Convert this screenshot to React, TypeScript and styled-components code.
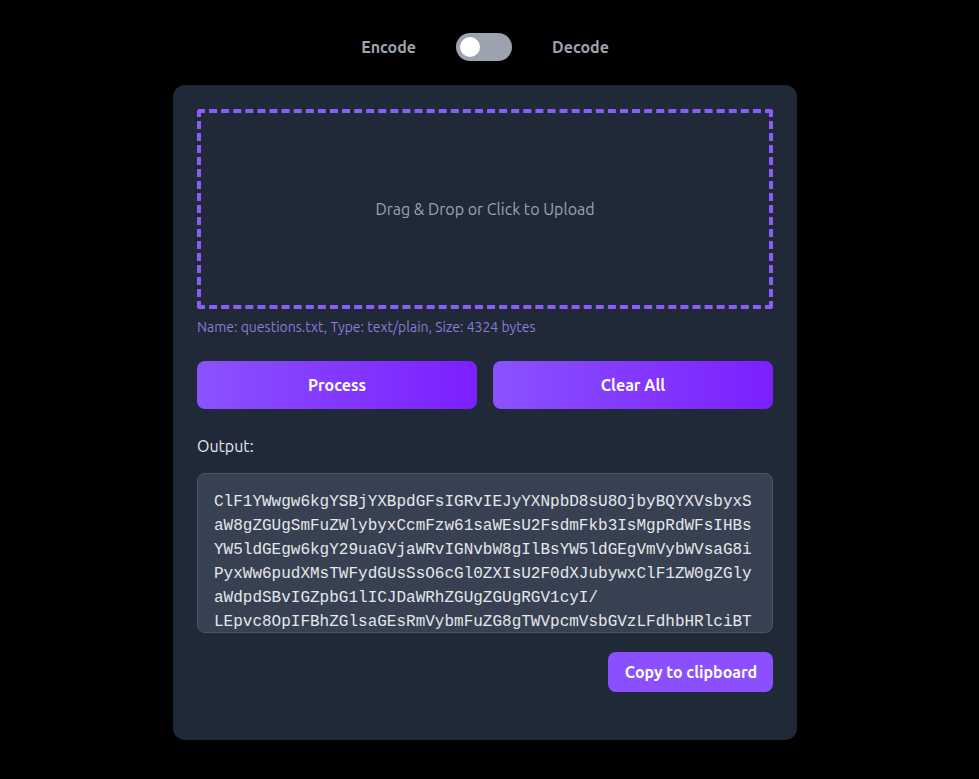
import React, { useState } from "react";
import styled, { createGlobalStyle } from "styled-components";

const GlobalStyle = createGlobalStyle`
  html, body {
    margin: 0;
    padding: 0;
    background: #000000;
  }
  body {
    font-family: Ubuntu, "Noto Sans", "Open Sans", sans-serif;
    color: #e5e7eb;
  }
  * { box-sizing: border-box; }
`;

const Page = styled.div`
  min-height: 779px;
  display: flex;
  flex-direction: column;
  align-items: center;
  padding: 33px 9px 39px 0;
  gap: 24px;
`;

const ModeBar = styled.div`
  display: flex;
  align-items: center;
  gap: 40px;
  height: 28px;
`;

const ModeLabel = styled.span<{ $active?: boolean }>`
  font-size: 16px;
  font-weight: 700;
  color: ${(p) => (p.$active ? "#e5e7eb" : "#9ca3af")};
`;

const Switch = styled.button<{ $on: boolean }>`
  position: relative;
  width: 56px;
  height: 28px;
  border: none;
  border-radius: 14px;
  padding: 0;
  background: ${(p) => (p.$on ? "#8b5cf6" : "#9ca3af")};
  cursor: pointer;
`;

const Knob = styled.span<{ $on: boolean }>`
  position: absolute;
  top: 4px;
  left: ${(p) => (p.$on ? "32px" : "4px")};
  width: 20px;
  height: 20px;
  border-radius: 50%;
  background: #ffffff;
  transition: left 0.2s;
`;

const Card = styled.div`
  width: 624px;
  background: #1f2937;
  border-radius: 12px;
  padding: 24px 24px 48px;
  display: flex;
  flex-direction: column;
`;

const DropZone = styled.div`
  height: 200px;
  border: 4px dashed #8b5cf6;
  border-radius: 3px;
  display: flex;
  align-items: center;
  justify-content: center;
  color: #9ca3af;
  font-size: 16px;
  cursor: pointer;
`;

const FileInfo = styled.div`
  margin-top: 8px;
  font-size: 14px;
  line-height: 20px;
  color: #8f7ad8;
`;

const ButtonRow = styled.div`
  margin-top: 24px;
  display: grid;
  grid-template-columns: 1fr 1fr;
  gap: 16px;
`;

const GradientButton = styled.button`
  height: 48px;
  border: none;
  border-radius: 8px;
  background: linear-gradient(90deg, #8b52ff, #7b1fff);
  color: #ffffff;
  font-family: inherit;
  font-size: 16px;
  font-weight: 700;
  cursor: pointer;
`;

const OutputLabel = styled.div`
  margin-top: 25px;
  font-size: 16px;
  line-height: 24px;
  color: #e5e7eb;
`;

const OutputArea = styled.textarea`
  margin-top: 15px;
  width: 100%;
  height: 160px;
  padding: 16px;
  border: 1px solid #4b5563;
  border-radius: 8px;
  background: #374151;
  color: #e5e7eb;
  font-family: "Liberation Mono", "Courier New", monospace;
  font-size: 16px;
  line-height: 24px;
  resize: none;
  overflow: hidden;
  outline: none;
`;

const CopyRow = styled.div`
  margin-top: 19px;
  display: flex;
  justify-content: flex-end;
`;

const CopyButton = styled.button`
  height: 40px;
  padding: 0 16px 0 17px;
  border: none;
  border-radius: 8px;
  background: #8b4fff;
  color: #ffffff;
  font-family: inherit;
  font-size: 16px;
  font-weight: 700;
  cursor: pointer;
`;

const OUTPUT =
  "ClF1YWwgw6kgYSBjYXBpdGFsIGRvIEJyYXNpbD8sU8OjbyBQYXVsbyxSaW8gZGUgSmFuZWlybyxCcmFzw61saWEsU2FsdmFkb3IsMgpRdWFsIHBsYW5ldGEgw6kgY29uaGVjaWRvIGNvbW8gIlBsYW5ldGEgVmVybWVsaG8iPyxWw6pudXMsTWFydGUsSsO6cGl0ZXIsU2F0dXJubywxClF1ZW0gZGlyaWdpdSBvIGZpbG1lICJDaWRhZGUgZGUgRGV1cyI/\nLEpvc8OpIFBhZGlsaGEsRmVybmFuZG8gTWVpcmVsbGVzLFdhbHRlciBTYWxsZXMsS2xlYmVyIE1lbmRvbsOnYSBGaWxobywxCg==";

export default function App() {
  const [decode, setDecode] = useState(false);
  return (
    <>
      <GlobalStyle />
      <Page>
        <ModeBar>
          <ModeLabel>Encode</ModeLabel>
          <Switch $on={decode} onClick={() => setDecode(!decode)} aria-label="Toggle mode">
            <Knob $on={decode} />
          </Switch>
          <ModeLabel>Decode</ModeLabel>
        </ModeBar>
        <Card>
          <DropZone>Drag &amp; Drop or Click to Upload</DropZone>
          <FileInfo>Name: questions.txt, Type: text/plain, Size: 4324 bytes</FileInfo>
          <ButtonRow>
            <GradientButton>Process</GradientButton>
            <GradientButton>Clear All</GradientButton>
          </ButtonRow>
          <OutputLabel>Output:</OutputLabel>
          <OutputArea readOnly value={OUTPUT} />
          <CopyRow>
            <CopyButton>Copy to clipboard</CopyButton>
          </CopyRow>
        </Card>
      </Page>
    </>
  );
}
